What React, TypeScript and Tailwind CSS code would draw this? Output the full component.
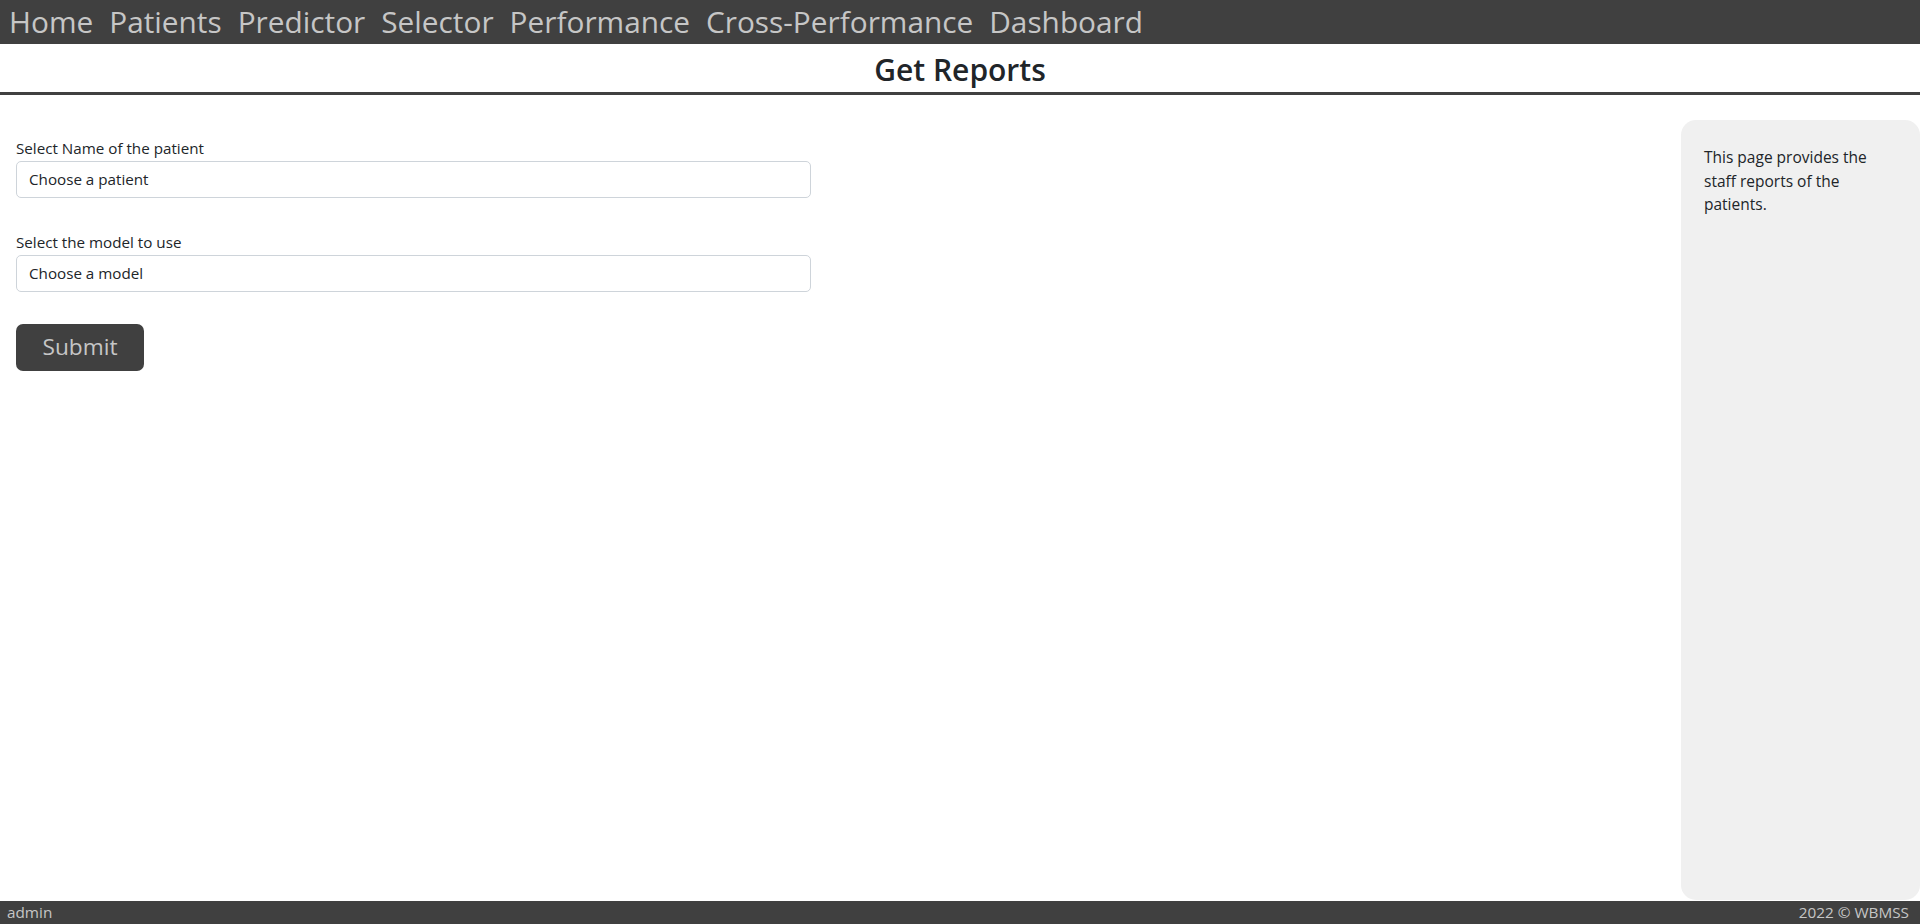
import React from "react";

const navItems = ["Home", "Patients", "Predictor", "Selector", "Performance", "Cross-Performance", "Dashboard"];

export default function App() {
  return (
    <div
      className="flex h-[924px] w-full flex-col bg-white"
      style={{ fontFamily: '"Open Sans", "Noto Sans", sans-serif' }}
    >
      <nav className="flex h-[44px] shrink-0 items-center gap-[16px] bg-[#404040] px-[9px] text-[29.8px] leading-none text-[#c6c6c6]">
        {navItems.map((n) => (
          <span key={n} className="whitespace-nowrap">{n}</span>
        ))}
      </nav>
      <header className="flex h-[51px] shrink-0 items-center justify-center border-b-[3px] border-[#404040] pt-[2px] text-[30px] font-semibold text-[#212529]">
        Get Reports
      </header>
      <main className="flex min-h-0 flex-1">
        <div className="flex-1 pl-[16px] pt-[43px]">
          <div className="w-[795px]">
            <label className="block h-[20px] text-[15.2px] leading-[20px] text-[#212529]">Select Name of the patient</label>
            <div className="mt-[3px] flex h-[37px] items-center rounded-[5px] border border-[#ced4da] px-[12px] text-[15.2px] text-[#212529]">
              Choose a patient
            </div>
            <label className="mt-[34px] block h-[20px] text-[15.2px] leading-[20px] text-[#212529]">Select the model to use</label>
            <div className="mt-[3px] flex h-[37px] items-center rounded-[5px] border border-[#ced4da] px-[12px] text-[15.2px] text-[#212529]">
              Choose a model
            </div>
            <button className="mt-[32px] flex h-[47px] w-[128px] items-center justify-center rounded-[7px] bg-[#404040] text-[22.7px] text-[#c6c6c6]">
              Submit
            </button>
          </div>
        </div>
        <aside className="mb-px mt-[25px] w-[239px] shrink-0 rounded-[15px] bg-[#f0f0f0] px-[23px] pt-[26px] text-[15.5px] leading-[23.5px] text-[#212529]">
          This page provides the staff reports of the patients.
        </aside>
      </main>
      <footer className="flex h-[23px] shrink-0 items-center justify-between bg-[#404040] px-[7px] text-[15.3px] text-[#c6c6c6]">
        <span>admin</span>
        <span className="pr-[4px]">2022 © WBMSS</span>
      </footer>
    </div>
  );
}
